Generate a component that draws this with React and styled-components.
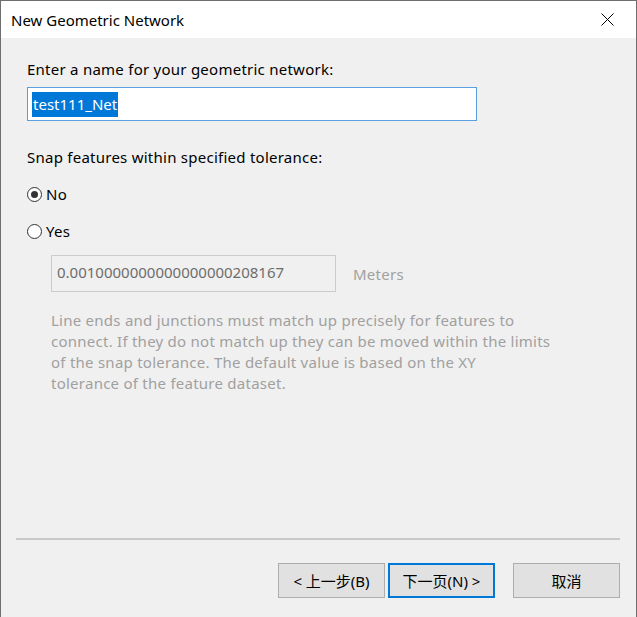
import React from 'react';
import styled, { createGlobalStyle } from 'styled-components';

const GlobalStyle = createGlobalStyle`
  html, body {
    margin: 0;
    padding: 0;
    background: #f0f0f0;
  }
  * {
    box-sizing: border-box;
  }
`;

const Window = styled.div`
  width: 637px;
  height: 617px;
  display: flex;
  flex-direction: column;
  border: 1px solid #6e6e6e;
  border-bottom: none;
  background: #f0f0f0;
  font-family: "Segoe UI", "Noto Sans", "Noto Sans CJK SC", sans-serif;
  color: #000;
`;

const TitleBar = styled.div`
  height: 37px;
  background: #fff;
  display: flex;
  align-items: center;
  justify-content: space-between;
  padding: 0 22px 0 10px;
  font-size: 15px;
`;

const CloseIcon = styled.svg`
  width: 13px;
  height: 13px;
`;

const Body = styled.div`
  flex: 1;
  display: flex;
  flex-direction: column;
  padding: 21px 0 0 26px;
`;

const Label = styled.div`
  font-size: 15px;
  line-height: 20px;
  letter-spacing: 0.25px;
  margin-top: ${(p) => p.$top || 0}px;
`;

const NameInput = styled.div`
  margin-top: 8px;
  width: 450px;
  height: 34px;
  border: 1px solid #5a9fe0;
  background: #fff;
  display: flex;
  align-items: center;
  padding-left: 4px;
  font-size: 15px;
`;

const Selected = styled.span`
  background: #0078d7;
  color: #fff;
  padding: 2px 1px 3px;
`;

const RadioRow = styled.label`
  display: flex;
  align-items: center;
  gap: 4px;
  font-size: 15px;
  line-height: 20px;
  letter-spacing: 0.25px;
  margin-top: ${(p) => p.$top}px;
`;

const RadioCircle = styled.span`
  width: 15px;
  height: 15px;
  border-radius: 50%;
  border: 1px solid #333;
  background: #fff;
  display: flex;
  align-items: center;
  justify-content: center;
  &::after {
    content: '';
    width: 7px;
    height: 7px;
    border-radius: 50%;
    background: ${(p) => (p.$checked ? '#333' : 'transparent')};
  }
`;

const ToleranceRow = styled.div`
  display: flex;
  align-items: center;
  gap: 17px;
  margin: 14px 0 0 24px;
`;

const DisabledBox = styled.div`
  width: 285px;
  height: 37px;
  border: 1px solid #cccccc;
  background: #f0f0f0;
  color: #6d6d6d;
  font-size: 15px;
  padding: 6px 0 0 5px;
`;

const Units = styled.span`
  color: #a0a0a0;
  font-size: 15px;
  letter-spacing: 0.25px;
`;

const Help = styled.p`
  margin: 18px 0 0 24px;
  white-space: nowrap;
  font-size: 15px;
  line-height: 21px;
  letter-spacing: 0.25px;
  color: #a0a0a0;
`;

const Footer = styled.div`
  padding: 0 16px 19px 15px;
`;

const Separator = styled.div`
  height: 2px;
  background: #c9c9c9;
  margin-bottom: 23px;
`;

const ButtonRow = styled.div`
  display: flex;
  justify-content: flex-end;
  gap: 3px;
`;

const Button = styled.button`
  width: ${(p) => (p.$wide ? 108 : 107)}px;
  height: 35px;
  margin-left: ${(p) => p.$gapLeft || 0}px;
  background: #e1e1e1;
  border: ${(p) => (p.$primary ? '2px solid #0078d7' : '1px solid #adadad')};
  font-family: inherit;
  font-size: 15px;
  color: #000;
  padding: 0;
`;

export default function App() {
  return (
    <>
      <GlobalStyle />
      <Window>
        <TitleBar>
          <span>New Geometric Network</span>
          <CloseIcon viewBox="0 0 13 13">
            <path d="M0.5 0.5L12.5 12.5M12.5 0.5L0.5 12.5" stroke="#000" strokeWidth="1" />
          </CloseIcon>
        </TitleBar>
        <Body>
          <Label>Enter a name for your geometric network:</Label>
          <NameInput>
            <Selected>test111_Net</Selected>
          </NameInput>
          <Label $top={26}>Snap features within specified tolerance:</Label>
          <RadioRow $top={17}>
            <RadioCircle $checked />
            No
          </RadioRow>
          <RadioRow $top={17}>
            <RadioCircle />
            Yes
          </RadioRow>
          <ToleranceRow>
            <DisabledBox>0.0010000000000000000208167</DisabledBox>
            <Units>Meters</Units>
          </ToleranceRow>
          <Help>
            Line ends and junctions must match up precisely for features to
            <br />
            connect. If they do not match up they can be moved within the limits
            <br />
            of the snap tolerance. The default value is based on the XY
            <br />
            tolerance of the feature dataset.
          </Help>
        </Body>
        <Footer>
          <Separator />
          <ButtonRow>
            <Button>&lt; 上一步(B)</Button>
            <Button $primary>下一页(N) &gt;</Button>
            <Button $gapLeft={15}>取消</Button>
          </ButtonRow>
        </Footer>
      </Window>
    </>
  );
}
